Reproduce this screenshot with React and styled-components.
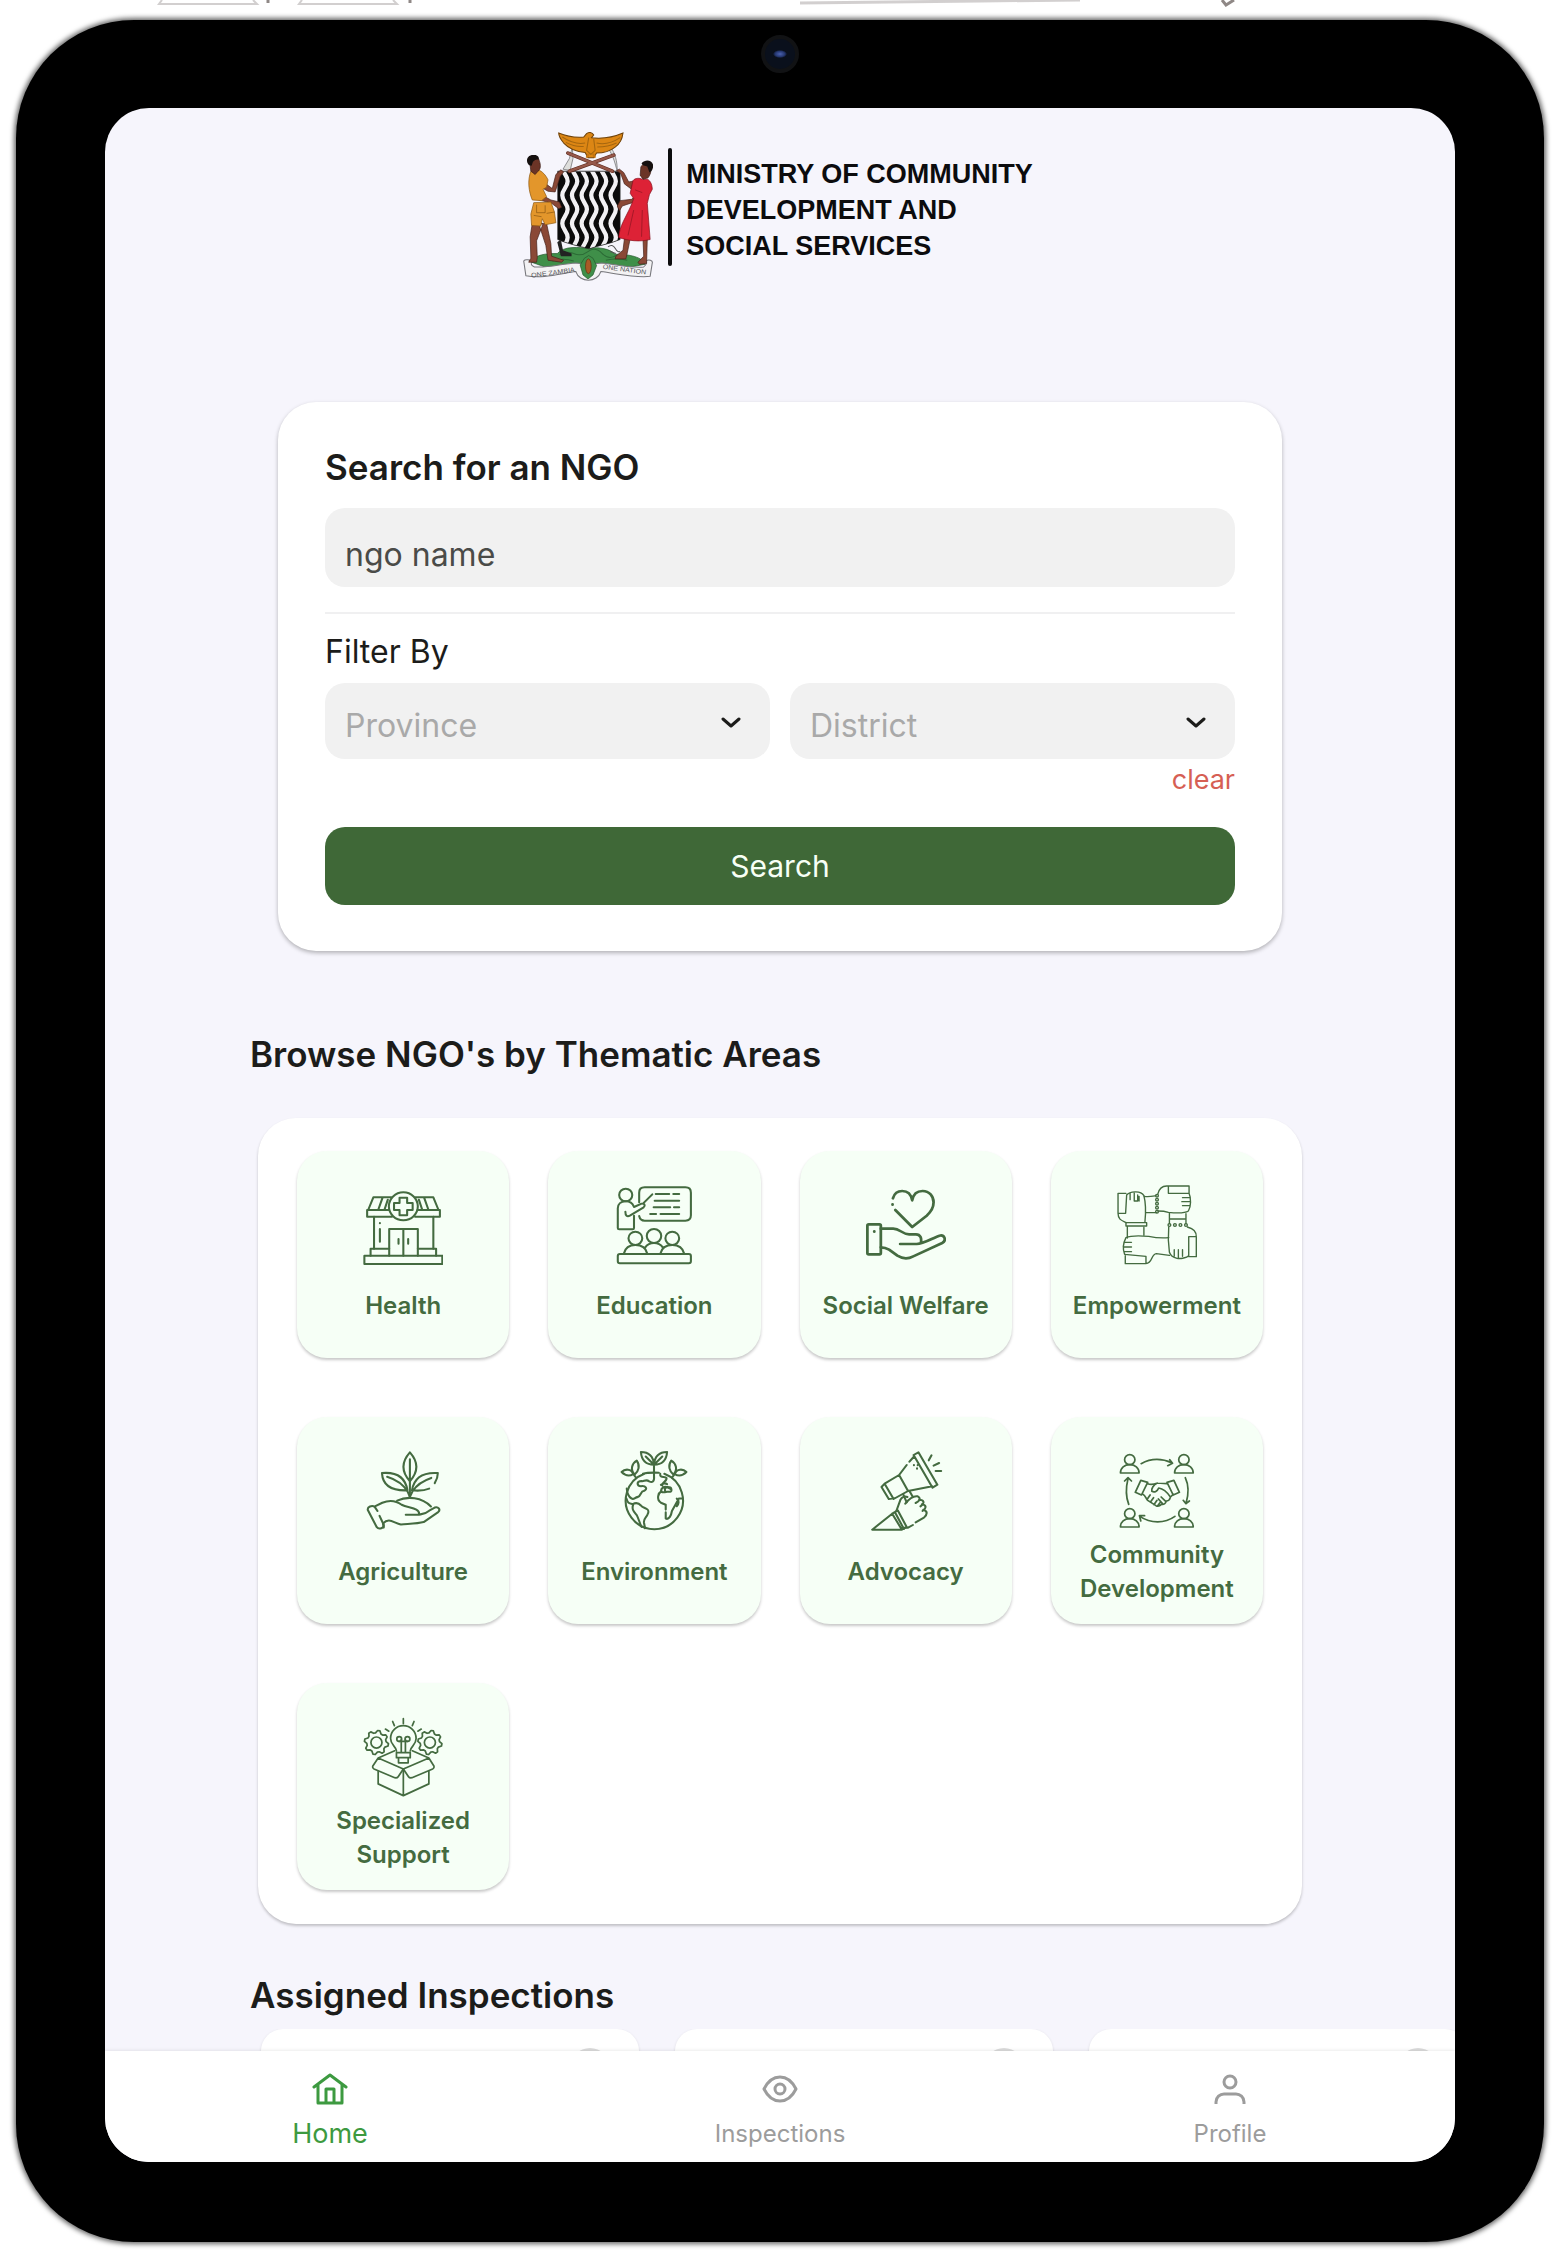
import { useState } from 'react'
import styled, { createGlobalStyle } from 'styled-components'

const GlobalStyle = createGlobalStyle`
  * {
    box-sizing: border-box;
  }

  body {
    margin: 0;
    background-color: #ffffff;
    font-family: Inter, 'Noto Sans', sans-serif;
    color: #1c1c1a;
  }

  button,
  input,
  select {
    font-family: inherit;
  }
`

const Page = styled.div`
  position: relative;
  padding: 20px 16px 20px;
`

const EdgeMarks = styled.svg`
  position: absolute;
  top: 0;
  left: 0;
  width: 100%;
  height: 8px;
`

const Device = styled.div`
  border-radius: 118px;
  padding: 0 89px 80px;
  background-color: #000000;
  box-shadow: 0 0 5px 2px rgba(0, 0, 0, 0.6);
`

const Bezel = styled.div`
  display: flex;
  justify-content: center;
  align-items: center;
  height: 88px;
  padding-bottom: 20px;
`

const Camera = styled.div`
  width: 38px;
  height: 38px;
  border: 4px solid #111214;
  border-radius: 50%;
  background: radial-gradient(ellipse 7px 4px at center, #4c62b0 0%, #24366f 70%, #0a101c 100%);
`

const Screen = styled.div`
  overflow: hidden;
  border-radius: 44px;
  background-color: #f6f5fc;
`

const Header = styled.header`
  display: flex;
  justify-content: center;
  align-items: center;
  padding: 24px 4px 0 0;
`

const HeaderBar = styled.div`
  width: 4px;
  height: 118px;
  margin: 0 14px 0 15px;
  border-radius: 2px;
  background-color: #0c0c0e;
`

const Ministry = styled.h1`
  margin: 0;
  padding-top: 6px;
  font-family: 'Liberation Sans', Arial, sans-serif;
  font-size: 27px;
  font-weight: 700;
  line-height: 36px;
  color: #0c0c0e;
`

const SearchCard = styled.form`
  max-width: 1004px;
  margin: 120px auto 0;
  padding: 44px 47px 46px;
  border-radius: 38px;
  background-color: #ffffff;
  box-shadow: 0 2px 4px rgba(0, 0, 0, 0.28);
`

const Title = styled.h2`
  display: block;
  margin: 0;
  font-size: 35px;
  font-weight: 600;
  line-height: 42px;
`

const NameInput = styled.input`
  display: block;
  width: 100%;
  height: 79px;
  margin-top: 20px;
  border: 0;
  border-radius: 20px;
  padding: 14px 20px 0;
  background-color: #f1f1f1;
  font-size: 32px;
  color: #4a4b48;

  &::placeholder {
    color: #4a4b48;
    opacity: 1;
  }
`

const Divider = styled.hr`
  height: 2px;
  margin: 25px 0 18px;
  border: 0;
  background-color: #f0f0f1;
`

const FilterLabel = styled.div`
  font-size: 32px;
  line-height: 40px;
`

const Filters = styled.div`
  display: grid;
  grid-template-columns: 1fr 1fr;
  gap: 20px;
  margin-top: 11px;
`

const SelectBox = styled.div`
  position: relative;

  svg {
    position: absolute;
    top: 34px;
    right: 29px;
    pointer-events: none;
  }
`

const Select = styled.select`
  width: 100%;
  height: 76px;
  border: 0;
  border-radius: 20px;
  padding: 8px 60px 0 20px;
  appearance: none;
  background-color: #f1f1f1;
  font-size: 32px;
  color: #a9a9a9;
`

const ClearButton = styled.button`
  display: block;
  margin: 5px 0 31px auto;
  border: 0;
  padding: 0;
  background: none;
  font-size: 27px;
  line-height: 32px;
  color: #d65f54;
`

const SubmitButton = styled.button`
  display: block;
  width: 100%;
  height: 78px;
  border: 0;
  border-radius: 20px;
  background-color: #3f6837;
  font-size: 30px;
  color: #f7fff5;
`

const Section = styled.section`
  max-width: 1060px;
  margin: ${props => props.$top}px auto 0;
`

const Panel = styled.div`
  display: grid;
  grid-template-columns: repeat(4, 1fr);
  gap: 59px 39px;
  margin: 43px 8px 0;
  border-radius: 38px;
  padding: 33px 39px 34px;
  background-color: #ffffff;
  box-shadow: 0 2px 3px rgba(0, 0, 0, 0.22);
`

const Tile = styled.button`
  display: flex;
  flex-direction: column;
  align-items: center;
  height: 207px;
  border: 0;
  border-radius: 30px;
  padding: 34px 8px 18px;
  background-color: #f6fff6;
  box-shadow: 0 2px 3px rgba(0, 0, 0, 0.22);
  color: #446b40;
`

const TileIcon = styled.svg`
  flex: none;
  width: 80px;
  height: 80px;
  fill: none;
  stroke: currentColor;
  stroke-width: ${props => props.$stroke};
  stroke-linecap: round;
  stroke-linejoin: round;
`

const TileLabel = styled.span`
  display: flex;
  flex: 1;
  align-items: center;
  margin-top: 7px;
  font-size: 24px;
  font-weight: 600;
  line-height: 34px;
  text-align: center;
`

const InspectionStrip = styled.div`
  display: flex;
  gap: 36px;
  height: 22px;
  margin-top: 13px;
  padding-left: max(16px, calc((100% - 1038px) / 2));
  overflow: hidden;
`

const InspectionCard = styled.article`
  display: flex;
  flex: none;
  justify-content: flex-end;
  width: 378px;
  height: 160px;
  border-radius: 22px;
  padding: 19px 29px;
  background-color: #ffffff;
  box-shadow: 0 1px 3px rgba(0, 0, 0, 0.12);
`

const CardDot = styled.span`
  width: 40px;
  height: 40px;
  border-radius: 50%;
  background-color: #dcdcdc;
`

const TabBar = styled.nav`
  position: relative;
  display: grid;
  grid-template-columns: repeat(3, 1fr);
  height: 111px;
  background-color: #ffffff;
  box-shadow: 0 -1px 3px rgba(0, 0, 0, 0.08);
`

const Tab = styled.a`
  display: flex;
  flex-direction: column;
  align-items: center;
  gap: 10px;
  padding-top: 20px;
  font-size: ${props => (props.$active ? 27 : 24)}px;
  line-height: 34px;
  color: ${props => (props.$active ? '#3d9a40' : '#9c9c9c')};
  text-decoration: none;

  svg {
    width: 36px;
    height: 36px;
    fill: none;
    stroke: currentColor;
    stroke-width: 3;
  }
`

const waveLine = x => {
  let d = `M${x} 172`
  for (let y = 172; y < 420; y += 84) {
    d += ` c0 18 15 24 15 42 s-15 24 -15 42`
  }
  return d
}

const gear = (cx, cy) => {
  const points = []
  for (let i = 0; i < 32; i++) {
    const r = i % 4 < 2 ? 35 : 28
    const a = (i * Math.PI) / 16 + 0.1
    points.push(`${(cx + r * Math.cos(a)).toFixed(1)},${(cy + r * Math.sin(a)).toFixed(1)}`)
  }
  return points.join(' ')
}

const Emblem = () => (
  <svg width='130' height='150' viewBox='68 67 364 448' preserveAspectRatio='none' role='img' aria-label='Coat of arms'>
    <defs>
      <clipPath id='shield'>
        <path d='M165 184h175v204c-30 14-62 18-87 28-26-8-58-14-88-28z' />
      </clipPath>
    </defs>
    {/* mound */}
    <path d='M92 456c10-24 40-26 72-26 20-24 60-18 88-16 30-4 60 2 74 18 40 0 76 8 84 30l-60 12H140z' fill='#3f8f49' stroke='#23592c' strokeWidth='2' />
    <path d='M170 434q20-14 40-4t40-6 40 6 40 4M150 452q30-10 60 0M300 450q30-8 60 0' fill='none' stroke='#2c6b36' strokeWidth='3' />
    {/* ribbon */}
    <path d='M70 452c4-6 20-4 22 4-2 8 0 10 8 14 36 4 78-10 116-12 24 4 48 4 72 0 40 4 84 16 118 12 6-4 8-12 6-18 8-6 20-2 18 6l-6 40c-40 6-92-8-138-14-10 34-60 34-70 0-50 8-96 22-140 12z' fill='#f3f2f4' stroke='#77777c' strokeWidth='3' />
    <text x='90' y='494' fontSize='20' fontFamily='Liberation Sans, sans-serif' fill='#55555a' transform='rotate(-8 150 484)'>ONE ZAMBIA</text>
    <text x='290' y='484' fontSize='20' fontFamily='Liberation Sans, sans-serif' fill='#55555a' transform='rotate(8 350 484)'>ONE NATION</text>
    <path d='M228 464l12-20 12-8 12 8 10 22-10 28-14 12-14-12z' fill='#3f8f49' stroke='#23592c' strokeWidth='2' />
    <ellipse cx='251' cy='468' rx='8' ry='22' fill='#a85a26' stroke='#633210' strokeWidth='2' />
    {/* shield */}
    <g clipPath='url(#shield)'>
      <rect x='160' y='180' width='184' height='240' fill='#0b0b0b' />
      {[178, 205, 232, 259, 286, 313].map(x => (
        <path key={x} d={waveLine(x)} fill='none' stroke='#f2f1f4' strokeWidth='12' />
      ))}
    </g>
    <path d='M165 184h175v204c-30 14-62 18-87 28-26-8-58-14-88-28z' fill='none' stroke='#222222' strokeWidth='2' />
    {/* hoe and pick */}
    <path d='M206 112l-8 34-18 32 20 4 8-36zM312 110c14 20 20 44 20 74-6-20-10-46-26-68z' fill='#dededc' stroke='#66666a' strokeWidth='2' />
    <path d='M194 130l124 54M322 136l-124 48' stroke='#5f2c20' strokeWidth='11' strokeLinecap='round' />
    <path d='M194 130l124 54M322 136l-124 48' stroke='#96584a' strokeWidth='7' strokeLinecap='round' />
    {/* eagle */}
    <path d='M168 70c22 10 46 14 70 12l8-10c6-6 16-4 20 4l-6 8c30 4 62-2 88-14-2 18-8 32-22 42-14 12-34 18-52 18l-8 14h-16l-8-16c-24-2-46-12-60-28-8-10-14-20-14-30z' fill='#dc8614' stroke='#70430a' strokeWidth='3' />
    <path d='M178 82q34 24 64 18M188 98q24 14 50 12M340 84q-34 24-66 16M330 100q-24 12-54 12M252 84l-6 38 12 12 12-12-4-34' fill='none' stroke='#a5660f' strokeWidth='3' />
    <path d='M252 132l-6 12M264 132l6 12' stroke='#c47410' strokeWidth='6' />
    {/* man */}
    <path d='M94 340l-6 40 2 64-6 12h22l2-14-2-50 18-50zM134 340l12 60 2 38 34 12-6 6-38-6-6-44-20-66z' fill='#8a4836' stroke='#45211a' strokeWidth='2' />
    <path d='M130 220l20 16 10-42 14-14 8 6-10 14-14 46-20-2-16-10zM112 250l34 20 24 6 6 16-8 4-20-16-40-12z' fill='#8a4836' stroke='#45211a' strokeWidth='2' />
    <path d='M90 184l20-4c12 4 22 16 28 30l-4 22-10 6 10 22-14 12-26-2c-10-26-14-58-4-86z' fill='#e3962b' stroke='#8b5712' strokeWidth='2' />
    <path d='M98 278l48-2 10 30 4 32-30 6-8-18-4 22-26-2-2-34z' fill='#e3962b' stroke='#8b5712' strokeWidth='2' />
    <path d='M106 284v24h24v-22M134 310l22-4M98 316l22 4' fill='none' stroke='#8b5712' strokeWidth='2' />
    <path d='M86 150c4-12 26-12 28 4 4 12 4 24-4 30l-8 10-12-10z' fill='#6b3426' stroke='#3a1b14' strokeWidth='2' />
    <path d='M80 158c-4-16 8-24 20-22 10 0 14 8 12 14-8-2-12 2-16 6l-4 12c-6 0-10-4-12-10z' fill='#15100f' />
    {/* woman */}
    <path d='M352 386l-4 34-20 18-2 8h30l4-18 8-42zM404 386l2 52-16 18 4 6 20-2 2-74z' fill='#8a4836' stroke='#45211a' strokeWidth='2' />
    <path d='M376 214l-4 24-20-16-10-30-12-10 8-4 12 10 14 28zM408 250l-28 26-34 12-8 14-6-14 8-16 32-4 18-16z' fill='#8a4836' stroke='#45211a' strokeWidth='2' />
    <path d='M376 212c6-8 18-8 26-4h14c10 4 14 20 14 30l-8 16-6 26 8 108c-30 8-60 4-88-6 2-34 20-60 34-94l8-22-10-16z' fill='#dd2236' stroke='#86101d' strokeWidth='2' />
    <path d='M382 240l20 8M378 300l-16 76M402 300l-2 80' fill='none' stroke='#8e1521' strokeWidth='2' />
    <path d='M398 172c2-12 26-12 28 0 2 12-2 24-8 32l-14 4-8-12z' fill='#6b3426' stroke='#3a1b14' strokeWidth='2' />
    <path d='M400 160c10-12 28-10 32 4 2 12-4 22-10 24l-6-18c-6-4-14-2-16-10z' fill='#15100f' />
    <path d='M164 396l10-8 6 32 24 10v8h-30z' fill='#222222' />
    <path d='M306 410q12-10 20 4t14 10M312 424l16 6' fill='none' stroke='#555555' strokeWidth='3' />
  </svg>
)

const HealthIcon = () => (
  <TileIcon viewBox='0 0 232 240' preserveAspectRatio='none' $stroke={6}>
    <path d='M82 37H30L15 75M57 37L44 75M72 44L62 75M152 37h52l15 38M177 37l13 38M162 44l10 31' />
    <path d='M76 75H12v20h72M158 75h65v20h-72' />
    <circle cx='117' cy='64' r='42' />
    <path d='M106 38h22v16h16v21h-16v16h-22V75H90V54h16z' />
    <path d='M32 95v96M204 95v96M49 114v1M49 132v38' />
    <path d='M76 212v-80h83v80M117 132v80M103 162v14M131 162v14' />
    <path d='M76 191H22v21M159 191h53v21' />
    <rect x='4' y='212' width='226' height='25' />
  </TileIcon>
)

const EducationIcon = () => (
  <TileIcon viewBox='0 0 232 240' preserveAspectRatio='none' $stroke={6}>
    <path d='M73 52V23c0-10 6-16 16-16h118c10 0 16 6 16 16v68c0 10-6 16-16 16H89c-9 0-14-4-16-14' />
    <circle cx='34' cy='30' r='19' />
    <path d='M58 92v37c0 3-2 4-4 4H15c-3 0-4-1-4-4V70c0-13 9-21 23-21 12 0 20 6 24 17l22-10c8-3 12 6 6 11L46 92c-8 4-13 0-13-12M84 56l27-28' />
    <path d='M121 27h39M172 27h17M118 47h71M115 67h48M174 67h15M105 87h17M135 87h54' />
    <circle cx='62' cy='160' r='20' />
    <circle cx='116' cy='153' r='21' />
    <circle cx='169' cy='160' r='20' />
    <path d='M29 205c4-18 16-25 33-25s30 7 34 25M90 188c6-9 15-14 26-14s20 5 26 14M135 205c4-18 16-25 34-25s30 7 34 25' />
    <rect x='11' y='207' width='212' height='28' rx='6' />
  </TileIcon>
)

const WelfareIcon = () => (
  <TileIcon viewBox='0 0 232 240' preserveAspectRatio='none' $stroke={8}>
    <path d='M78 40c4-14 14-22 27-22 16 0 26 11 29 28 3-17 14-28 30-28 20 0 32 16 32 34 0 17-8 29-20 40l-42 34-49-51M77 58v1' />
    <rect x='4' y='118' width='39' height='90' rx='4' />
    <path d='M24 139v1' />
    <path d='M43 131h36c20 0 26 17 46 17h20c13 0 17 12 14 26M99 177h48c20 0 46-18 66-25 14-4 22 14 8 22l-84 40c-16 9-32 7-46-2l-24-18c-8-5-15-7-24-7' />
  </TileIcon>
)

const EmpowermentIcon = () => (
  <TileIcon viewBox='0 0 232 240' preserveAspectRatio='none' $stroke={4}>
    <path d='M26 25H3v60h22l3-55c8-10 40-16 50 2 6 24 6 50 3 79M3 85c0 20 12 22 24 28M38 24v20M50 24v24h10V30M64 34v14' />
    <path d='M26 113h60v10H26zM30 123v36M78 127v24M79 34c12 2 22 0 34-2M84 83h30' />
    {[32, 44, 56, 68, 80].map(y => <circle key={y} cx='116' cy={y} r='4' />)}
    <path d='M118 28c4-18 12-25 26-25h65v22h-60V3M209 25c6 14 6 40-2 53-12 8-40 6-58 4-12-4-20-4-30-4M190 38h22M188 50h25M190 62h20' />
    <path d='M152 84v32M200 86v30M152 102h48' />
    {[152, 168, 184, 200].map(x => <circle key={x} cx={x} cy='120' r='4' />)}
    <path d='M150 126c-2 26-2 48 2 76 4 12 12 16 22 18 12 2 28-2 34-8V155h22v60h-22M204 126c18 6 26 12 26 30M166 194v20M178 194v24M190 194v20' />
    <path d='M150 158c-22 2-40 0-58-4-22-2-50-4-66 4-8 16-10 34-4 50l62 6v22H24v-28M22 172h20M18 186h24M22 200h20M84 236c20-2 14-28 30-30l38 5' />
  </TileIcon>
)

const AgricultureIcon = () => (
  <TileIcon viewBox='0 0 232 232' $stroke={6}>
    <path d='M136 4c-25 28-25 56 0 84 25-28 25-56 0-84zM136 24v112' />
    <path d='M55 64c2 34 24 52 74 50-6-36-28-54-74-50zM70 75c26 8 46 20 60 44l6 14' />
    <path d='M192 109c-14 6-30 7-50 5 6-36 30-53 75-50 0 11-3 20-9 29M198 78c-24 8-42 20-54 38l-8 17' />
    <path d='M99 144c30-14 72-10 98 17' />
    <path d='M36 160l20-10c20-8 40-6 56 6 20 10 52 8 51 28M124 185c30 0 52 2 68-12l16-9c10-4 18 6 10 13l-42 29c-18 5-42 5-66 7-20-3-34-22-52-3l2 12' />
    <path d='M42 174l-8-12c-8-6-22 0-20 9l26 50c6 8 22 2 20-7l-12-26' />
  </TileIcon>
)

const EnvironmentIcon = () => (
  <TileIcon viewBox='0 0 232 232' $stroke={6}>
    <path d='M88 66a83 83 0 1 0 58 0M84 66c10-3 20-4 46-3' />
    <path d='M116 72V40c-2-25-16-37-38-37 2 25 14 37 38 37 24 0 36-12 38-37-22 0-36 12-38 37M92 16l24 24 24-24' />
    <path d='M60 68c-14-14-8-32 6-40 10 14 6 30-6 40zM56 67c-14 8-26 2-34-6 10-10 28-10 34 6l8 10M172 68c14-14 8-32-6-40-10 14-6 30 6 40zM176 67c14 8 26 2 34-6-10-10-28-10-34 6l-8 10' />
    <path d='M116 72c2 18-6 20-14 16-10-8-16 2-22-1-16 0-14 15-2 15 14-2 22 8 8 14-8 0-8 14-16 17-12 2-12 10-20 4-10-6-12-16-13-28' />
    <path d='M36 138c4 14 8 14 18 16 10-5 18-3 24 4 6 10 26 6 21 22-4 14-14 14-12 28l3 16M56 154c-6 16 2 22 10 32 6 12 8 22 14 34' />
    <path d='M134 66c-2 14 14 6 18 12 4 8-14 14-12 22M164 110c-12-8-20-8-26 0-6 12 6 10 16 8h10c4 0 4-14-4-13-10-2-14 4-12 10M136 98c6-4 12-6 18-2M138 116c-10 6-16 24-2 34l14 6v14M150 178v18c10 4 16-10 18-22l20-36h10M182 138c8 6 6 16 0 22' />
  </TileIcon>
)

const AdvocacyIcon = () => (
  <TileIcon viewBox='0 0 232 240' preserveAspectRatio='none' $stroke={6}>
    <path d='M138 12l14-8 55 97-14 9zM138 18l-12 14M118 42L96 72M122 120l70-14M96 72l26 48-42 24-26-46zM54 98l-9 10 21 36 14-2' />
    <path d='M182 28l8-15M196 44l16-8M202 60h16M139 42v1M148 52v1M150 42v1' />
    <path d='M108 130l10 24M126 120l10 18' />
    <path d='M88 180l12-34c4-8 12-12 20-8M114 158c12-16 24-24 36-22 10 6 6 14-6 20M154 146c14 0 18 10 4 20M162 160c14 2 14 12 2 20M166 176c14 4 12 14 2 24l-24 14M136 222l-14 8h-18' />
    <path d='M76 188l16-10 26 50-14 8zM84 184l26 50M76 188L18 236h86' />
  </TileIcon>
)

const people = [[37, 26], [194, 26], [37, 188], [194, 188]]

const CommunityIcon = () => (
  <TileIcon viewBox='0 0 232 240' preserveAspectRatio='none' $stroke={5}>
    {people.map(([x, y]) => (
      <g key={`${x}-${y}`}>
        <circle cx={x} cy={y} r='15' />
        <path d={`M${x - 27} ${y + 40}c0-16 12-25 27-25s27 9 27 25z`} />
      </g>
    ))}
    <path d='M70 38c28-16 60-16 90-2M153 26l8 11-14 7M198 80c12 26 10 50 2 78M192 148l8 10 10-8M168 196c-30 22-70 22-102 0M80 194l-15 0 4 16M34 160c-10-26-8-52-2-78M22 90l10-10 10 10' />
    <path d='M69 88l-16 36 18 8 18-38zM165 88l16 36-18 8-18-38z' />
    <path d='M89 98c10 4 18 2 28-2l28 2M117 96c-12 6-18 18-16 25 8 4 16 0 20-10 12 2 24 12 33 26M75 130c8 4 8 12 14 18l24 16c8 4 12 0 16-4 10 2 12-4 14-10 10 0 10-6 12-12l8-8M96 132l-8 12M106 140l-9 13M116 148l-9 13M124 156l-6 8M128 138l14 14M120 144l12 14' />
  </TileIcon>
)

const SupportIcon = () => (
  <TileIcon viewBox='0 0 232 232' $stroke={5}>
    <path d='M97 98c-2-14-17-17-17-36a37 37 0 0 1 74 0c0 19-15 22-17 36M97 103h40v15H97zM103 118h28v15h-28z' />
    <circle cx='105' cy='64' r='7' />
    <circle cx='129' cy='64' r='7' />
    <path d='M111 66v36M123 66v36M105 71h24M117 5v14M86 13l5 12M148 13l-5 12M65 35l10 6M169 35l-10 6' />
    <polygon points={gear(39, 74)} />
    <circle cx='39' cy='74' r='16' />
    <polygon points={gear(194, 74)} />
    <circle cx='194' cy='74' r='16' />
    <path d='M92 98l-48 21 73 32 74-32-48-21M44 119l-16 24c-1 4 0 6 4 8l60 25c5 1 8 0 10-3l15-22 15 22c2 3 5 4 10 3l60-25c4-2 5-4 4-8l-15-24' />
    <path d='M44 158v36l73 34 74-34v-36M117 151v77' />
  </TileIcon>
)

const areas = [
  { name: 'Health', Icon: HealthIcon },
  { name: 'Education', Icon: EducationIcon },
  { name: 'Social Welfare', Icon: WelfareIcon },
  { name: 'Empowerment', Icon: EmpowermentIcon },
  { name: 'Agriculture', Icon: AgricultureIcon },
  { name: 'Environment', Icon: EnvironmentIcon },
  { name: 'Advocacy', Icon: AdvocacyIcon },
  { name: 'Community Development', Icon: CommunityIcon },
  { name: 'Specialized Support', Icon: SupportIcon }
]

const FilterSelect = ({ label, value, onChange }) => (
  <SelectBox>
    <Select aria-label={label} value={value} onChange={e => onChange(e.target.value)}>
      <option value=''>{label}</option>
    </Select>
    <svg width='20' height='12' viewBox='0 0 20 12' fill='none' stroke='#1c1c1a' strokeWidth='3' strokeLinecap='round' strokeLinejoin='round'>
      <path d='M2 2l8 7 8-7' />
    </svg>
  </SelectBox>
)

const App = () => {
  const [name, setName] = useState('')
  const [province, setProvince] = useState('')
  const [district, setDistrict] = useState('')

  const clear = () => {
    setName('')
    setProvince('')
    setDistrict('')
  }

  return (
    <>
      <GlobalStyle />
      <Page>
        <EdgeMarks aria-hidden='true' fill='none' stroke='#8f8886' strokeWidth='2'>
          <path d='M162 0l-3 4h98l-4-4M302 0l-3 4h98l-4-4' opacity='0.4' />
          <path d='M268 0v3M410 0v3M1222 0l4 5 8-5' strokeWidth='3' />
          <path d='M800 3l180-2 100-1' opacity='0.4' strokeWidth='3' />
        </EdgeMarks>
        <Device>
          <Bezel>
            <Camera />
          </Bezel>
          <Screen>
            <Header>
              <Emblem />
              <HeaderBar />
              <Ministry>
                MINISTRY OF COMMUNITY<br />
                DEVELOPMENT AND<br />
                SOCIAL SERVICES
              </Ministry>
            </Header>

            <SearchCard onSubmit={e => e.preventDefault()}>
              <Title as='label' htmlFor='ngo-name'>Search for an NGO</Title>
              <NameInput id='ngo-name' placeholder='ngo name' value={name} onChange={e => setName(e.target.value)} />
              <Divider />
              <FilterLabel>Filter By</FilterLabel>
              <Filters>
                <FilterSelect label='Province' value={province} onChange={setProvince} />
                <FilterSelect label='District' value={district} onChange={setDistrict} />
              </Filters>
              <ClearButton type='button' onClick={clear}>clear</ClearButton>
              <SubmitButton type='submit'>Search</SubmitButton>
            </SearchCard>

            <Section $top={82}>
              <Title>Browse NGO's by Thematic Areas</Title>
              <Panel>
                {areas.map(({ name, Icon }) => (
                  <Tile key={name} type='button'>
                    <Icon />
                    <TileLabel>{name}</TileLabel>
                  </Tile>
                ))}
              </Panel>
            </Section>

            <Section $top={50}>
              <Title>Assigned Inspections</Title>
            </Section>
            <InspectionStrip>
              {[1, 2, 3].map(id => (
                <InspectionCard key={id}>
                  <CardDot />
                </InspectionCard>
              ))}
            </InspectionStrip>

            <TabBar>
              <Tab href='#home' $active>
                <svg viewBox='0 0 36 36' strokeLinecap='round' strokeLinejoin='round'>
                  <path d='M2 16L18 4l16 12M6 14v18h24V14M14 32V18h8v14' />
                </svg>
                Home
              </Tab>
              <Tab href='#inspections'>
                <svg viewBox='0 0 36 36'>
                  <path d='M2 18C6 10 11 6 18 6s12 4 16 12c-4 8-9 12-16 12S6 26 2 18z' strokeLinejoin='round' />
                  <circle cx='18' cy='18' r='5' />
                </svg>
                Inspections
              </Tab>
              <Tab href='#profile'>
                <svg viewBox='0 0 36 36'>
                  <circle cx='18' cy='11' r='6' />
                  <path d='M4 33v-2c0-5 4-8 8-8h12c4 0 8 3 8 8v2' />
                </svg>
                Profile
              </Tab>
            </TabBar>
          </Screen>
        </Device>
      </Page>
    </>
  )
}

export default App
